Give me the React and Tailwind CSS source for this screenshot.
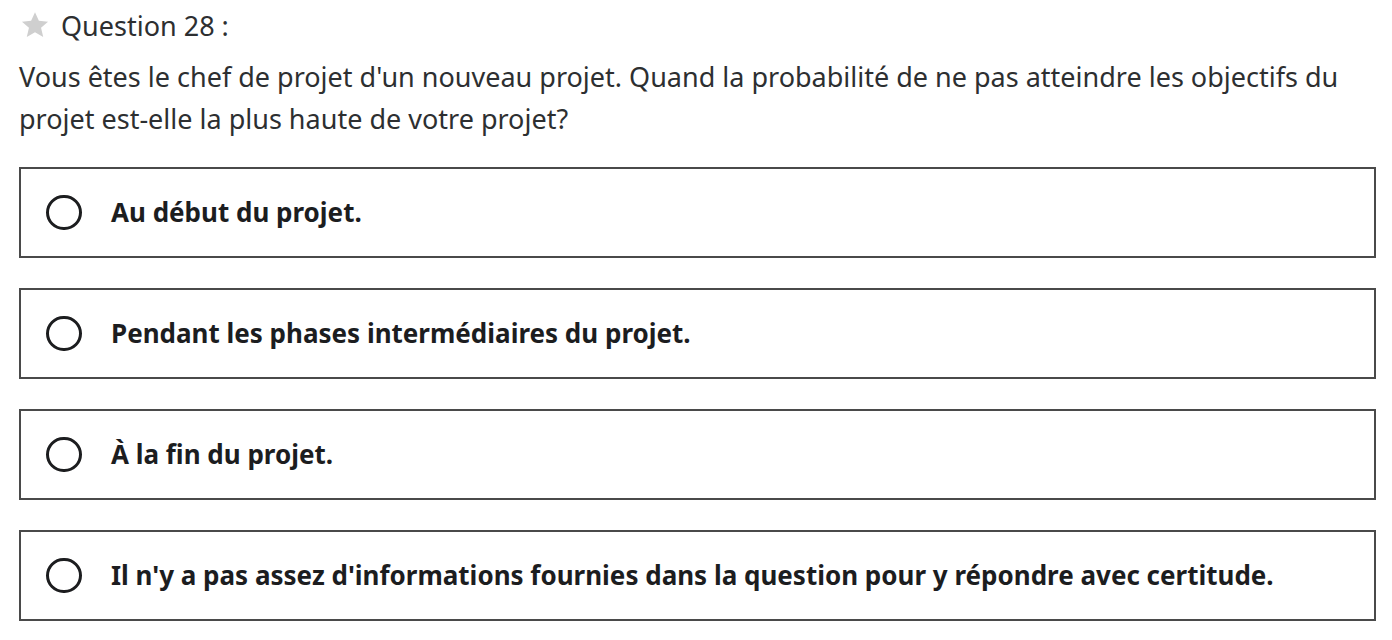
const options = [
  'Au début du projet.',
  'Pendant les phases intermédiaires du projet.',
  'À la fin du projet.',
  "Il n'y a pas assez d'informations fournies dans la question pour y répondre avec certitude.",
];

function Star() {
  return (
    <svg width="30" height="29" viewBox="0 0 24 24" className="shrink-0">
      <path
        d="M12 1l3.2 7.1 7.6.7-5.8 5.1 1.8 7.6L12 17.5l-6.8 4 1.8-7.6-5.8-5.1 7.6-.7z"
        fill="#cfcfcf"
      />
    </svg>
  );
}

export default function App() {
  return (
    <div className="w-[1392px] h-[640px] bg-white overflow-hidden pl-[19px] pr-[16px] pt-[10px] font-['Noto_Sans',sans-serif]">
      {/* entete de la question */}
      <div className="flex items-center h-[30px] pl-[1px] gap-[11px]">
        <Star />
        <span className="text-[27px] text-[#2d2f31] leading-none">Question 28 :</span>
      </div>

      <p className="mt-[16px] text-[27px] leading-[42px] text-[#2d2f31]">
        Vous êtes le chef de projet d'un nouveau projet. Quand la probabilité de ne pas atteindre les objectifs du projet est-elle la plus haute de votre projet?
      </p>

      <div className="mt-[27px] flex flex-col gap-[30px]">
        {options.map((opt) => (
          <div
            key={opt}
            className="h-[91px] border-2 border-[#4a4a4a] flex items-center pl-[25px]"
          >
            <div className="w-[36px] h-[35px] rounded-full border-[3px] border-[#1c1d1f] shrink-0" />
            <span className="ml-[29px] text-[26px] font-bold text-[#1c1d1f]">{opt}</span>
          </div>
        ))}
      </div>
    </div>
  );
}
